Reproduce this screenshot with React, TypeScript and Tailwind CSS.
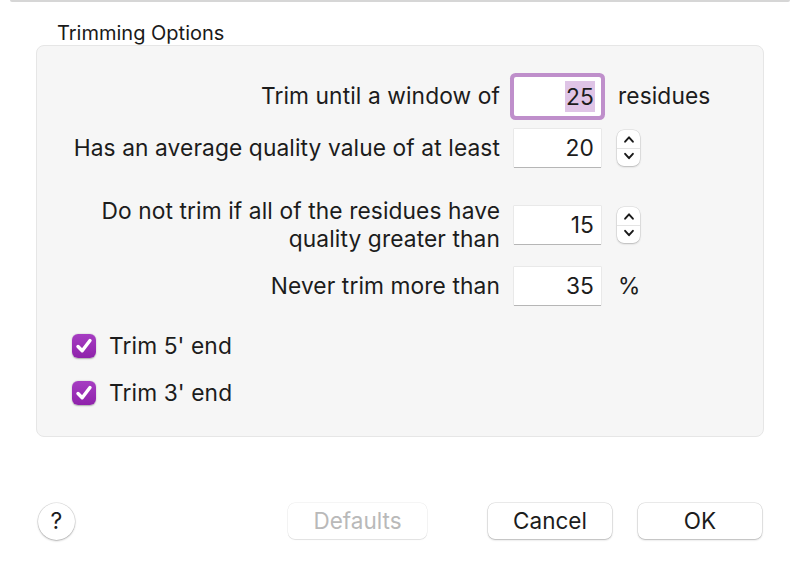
import React from "react";

function Stepper() {
  return (
    <div className="ml-[16px] flex h-[36px] w-[23px] flex-col items-center justify-between rounded-[7px] bg-white shadow-[0_0_0_0.5px_rgba(0,0,0,0.12),0_1px_2px_rgba(0,0,0,0.2)]">
      <svg width="14" height="17" viewBox="0 0 14 17" className="mt-[1px]">
        <path d="M3 11 L7 6.5 L11 11" fill="none" stroke="#1a1a1a" strokeWidth="2" strokeLinecap="round" strokeLinejoin="round" />
      </svg>
      <div className="h-[1px] w-[23px] bg-[#e4e4e4]" />
      <svg width="14" height="17" viewBox="0 0 14 17" className="mb-[1px]">
        <path d="M3 6 L7 10.5 L11 6" fill="none" stroke="#1a1a1a" strokeWidth="2" strokeLinecap="round" strokeLinejoin="round" />
      </svg>
    </div>
  );
}

function NumField({ value, focused }: { value: string; focused?: boolean }) {
  if (focused) {
    return (
      <div className="flex h-[39px] w-[87px] items-center justify-end rounded-[2px] bg-white pr-[6px] shadow-[0_0_0_4px_#bf8fcb]">
        <span className="bg-[#dfc4e6] px-[1px] leading-[31px]">{value}</span>
      </div>
    );
  }
  return (
    <div className="flex h-[38px] w-[87px] items-center justify-end bg-white pr-[7px] shadow-[0_0_0_0.5px_rgba(0,0,0,0.1),0_1px_0_rgba(0,0,0,0.22)]">
      {value}
    </div>
  );
}

function Check({ label }: { label: string }) {
  return (
    <div className="flex h-[24px] items-center leading-[24px]">
      <div className="flex h-[24px] w-[24px] items-center justify-center rounded-[6px] bg-gradient-to-b from-[#a63dc2] to-[#8f22ab] shadow-[0_0.5px_1.5px_rgba(0,0,0,0.3)]">
        <svg width="20" height="20" viewBox="0 0 20 20">
          <path d="M4 10.5 L8.2 14.8 L16 4.5" fill="none" stroke="white" strokeWidth="3.4" strokeLinecap="round" strokeLinejoin="round" />
        </svg>
      </div>
      <span className="ml-[13px]">{label}</span>
    </div>
  );
}

export default function App() {
  return (
    <div className="relative h-[577px] w-[800px] overflow-hidden bg-white text-[#1c1c1c] font-['Inter','Liberation_Sans',sans-serif]">
      <div className="mx-[10px] h-[2px] rounded-b-[2px] bg-[#d6d6d6]" />
      <div className="mt-[20px] pl-[57px] text-[20px] leading-[22px] text-[#1a1a1a]">Trimming Options</div>
      <div className="mx-[36px] mt-[1px] h-[392px] rounded-[8px] border border-[#e6e6e6] bg-[#f6f6f6] text-[22.75px] tracking-[0.1px]">
        <div className="flex flex-col">
          <div className="mt-[30px] flex h-[40px] items-center">
            <div className="w-[463px] text-right">Trim until a window of</div>
            <div className="ml-[14px]">
              <NumField value="25" focused />
            </div>
            <div className="ml-[17px]">residues</div>
          </div>
          <div className="mt-[12px] flex h-[40px] items-center">
            <div className="w-[463px] text-right">Has an average quality value of at least</div>
            <div className="ml-[14px]">
              <NumField value="20" />
            </div>
            <Stepper />
          </div>
          <div className="mt-[29px] flex h-[56px] items-center">
            <div className="w-[463px] text-right leading-[28px]">
              Do not trim if all of the residues have
              <br />
              quality greater than
            </div>
            <div className="ml-[14px]">
              <NumField value="15" />
            </div>
            <Stepper />
          </div>
          <div className="mt-[13px] flex h-[40px] items-center">
            <div className="w-[463px] text-right">Never trim more than</div>
            <div className="ml-[14px]">
              <NumField value="35" />
            </div>
            <div className="ml-[17px]">%</div>
          </div>
          <div className="mt-[28px] pl-[35px]">
            <Check label="Trim 5' end" />
          </div>
          <div className="mt-[23px] pl-[35px]">
            <Check label="Trim 3' end" />
          </div>
        </div>
      </div>
      <div className="mt-[66px] flex h-[36px] items-center text-[22.5px]">
        <div className="ml-[38px] flex h-[37px] w-[37px] items-center justify-center rounded-full bg-white text-[23px] shadow-[0_0_0_0.5px_rgba(0,0,0,0.15),0_1px_2px_rgba(0,0,0,0.25)]">
          ?
        </div>
        <div className="ml-[213px] flex h-[36px] w-[139px] items-center justify-center rounded-[7px] bg-white text-[#b9b9b9] shadow-[0_0_0_0.5px_rgba(0,0,0,0.08),0_1px_1px_rgba(0,0,0,0.08)]">
          Defaults
        </div>
        <div className="ml-[61px] flex h-[36px] w-[124px] items-center justify-center rounded-[7px] bg-white shadow-[0_0_0_0.5px_rgba(0,0,0,0.15),0_1px_2px_rgba(0,0,0,0.22)]">
          Cancel
        </div>
        <div className="ml-[26px] flex h-[36px] w-[124px] items-center justify-center rounded-[7px] bg-white shadow-[0_0_0_0.5px_rgba(0,0,0,0.15),0_1px_2px_rgba(0,0,0,0.22)]">
          OK
        </div>
      </div>
    </div>
  );
}
